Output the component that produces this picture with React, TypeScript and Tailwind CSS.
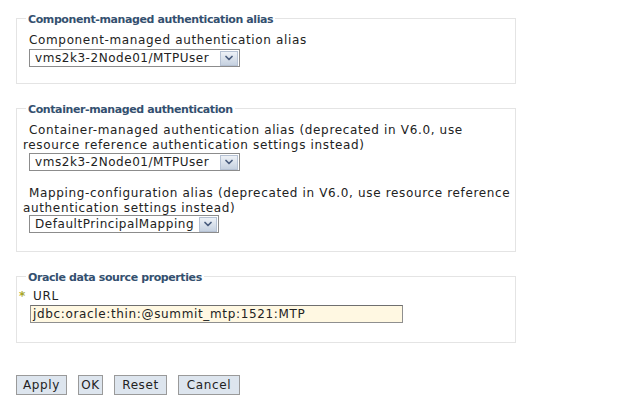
import { ChevronDown } from "lucide-react";

const font = { fontFamily: '"DejaVu Sans", Verdana, sans-serif' };

function FakeSelect({ value, width }: { value: string; width: string }) {
  return (
    <div
      className={`ml-[6px] flex h-[18px] items-center border border-[#8c8c8c] bg-white pl-[5px] pr-[1px] ${width}`}
    >
      <span className="flex-1 whitespace-nowrap text-[12px] leading-[16px] tracking-[0.55px] text-[#222]">
        {value}
      </span>
      <span className="flex h-[15px] w-[18px] shrink-0 items-center justify-center border border-[#b6c2d4] bg-gradient-to-b from-[#eef2f7] to-[#c6d1e0]">
        <ChevronDown className="h-[12px] w-[12px] text-[#4a5d7e]" strokeWidth={3.5} />
      </span>
    </div>
  );
}

function Box({
  title,
  className,
  children,
}: {
  title: string;
  className?: string;
  children: React.ReactNode;
}) {
  return (
    <fieldset
      className={`w-[500px] border border-[#e4e4e4] px-0 ${className ?? ""}`}
    >
      <legend className="ml-[9px] px-[2px] pt-[4px] text-[11px] font-bold leading-[14px] tracking-[-0.4px] text-[#34506f]">
        {title}
      </legend>
      <div className="pl-[6px] pr-[2px]">{children}</div>
    </fieldset>
  );
}

function Label({ text }: { text: string }) {
  return (
    <p className="indent-[6px] text-[12px] leading-[15px] tracking-[0.65px] text-[#222]">
      {text}
    </p>
  );
}

export default function App() {
  return (
    <div className="h-[407px] w-[640px] bg-white pl-4 pt-[9px]" style={font}>
      <Box title="Component-managed authentication alias" className="pb-[16px]">
        <div className="mt-[6px]">
          <Label text="Component-managed authentication alias" />
        </div>
        <div className="mt-[1px]">
          <FakeSelect value="vms2k3-2Node01/MTPUser" width="w-[211px]" />
        </div>
      </Box>

      <Box title="Container-managed authentication" className="mt-[15px] pb-[18px]">
        <div className="mt-[6px]">
          <Label text="Container-managed authentication alias (deprecated in V6.0, use resource reference authentication settings instead)" />
        </div>
        <div className="mt-0">
          <FakeSelect value="vms2k3-2Node01/MTPUser" width="w-[211px]" />
        </div>
        <div className="mt-[15px]">
          <Label text="Mapping-configuration alias (deprecated in V6.0, use resource reference authentication settings instead)" />
        </div>
        <div className="-mt-[1px]">
          <FakeSelect value="DefaultPrincipalMapping" width="w-[190px]" />
        </div>
      </Box>

      <Box title="Oracle data source properties" className="mt-[15px] pb-[19px]">
        <div className="mt-[4px] -ml-[4px] flex items-center text-[12px] leading-[15px] tracking-[0.65px] text-[#222]">
          <span className="w-[14px] font-bold text-[#a8a62a]">*</span>
          <span>URL</span>
        </div>
        <div className="mt-[1px] ml-[7px] flex h-[18px] w-[373px] items-center border border-[#8f8f8f] border-t-[#6f6f6f] bg-[#fff8e2] pl-[2px] text-[12px] tracking-[0.65px] text-[#222]">
          jdbc:oracle:thin:@summit_mtp:1521:MTP
        </div>
      </Box>

      <div className="mt-[32px] flex gap-[11px]">
        {[
          ["Apply", "w-[51px]"],
          ["OK", "w-[25px]"],
          ["Reset", "w-[53px]"],
          ["Cancel", "w-[62px]"],
        ].map(([t, w]) => (
          <button
            key={t}
            className={`h-[20px] ${w} border border-[#9a9a9a] bg-[#dde5ee] text-[12px] leading-[18px] tracking-[0.6px] text-[#222]`}
          >
            {t}
          </button>
        ))}
      </div>
    </div>
  );
}
